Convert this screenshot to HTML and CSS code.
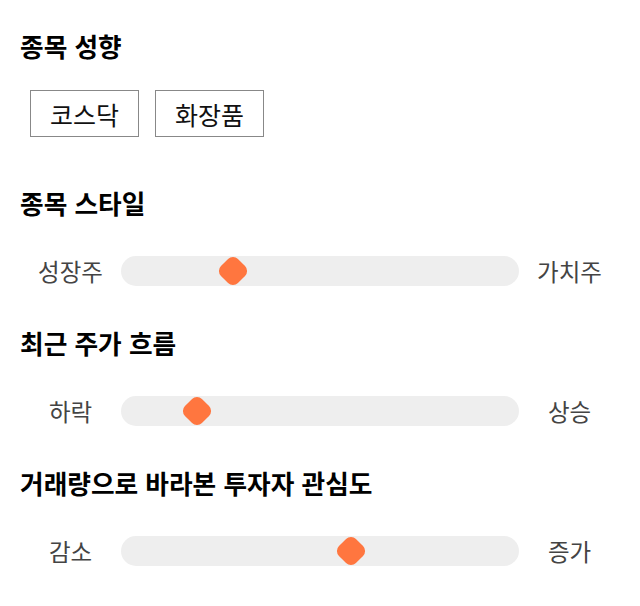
FILE: index.html
```html
<!DOCTYPE html>
<html lang="ko">
<head>
<meta charset="utf-8">
<link rel="stylesheet" href="styles.css">
</head>
<body>
<section class="section first">
  <h2 class="title">종목 성향</h2>
  <div class="chips">
    <span class="chip">코스닥</span>
    <span class="chip">화장품</span>
  </div>
</section>
<section class="section second">
  <h2 class="title">종목 스타일</h2>
  <div class="slider">
    <span class="label">성장주</span>
    <div class="track"><span class="thumb" style="left:28.1%"></span></div>
    <span class="label">가치주</span>
  </div>
</section>
<section class="section">
  <h2 class="title">최근 주가 흐름</h2>
  <div class="slider">
    <span class="label">하락</span>
    <div class="track"><span class="thumb" style="left:19.1%"></span></div>
    <span class="label">상승</span>
  </div>
</section>
<section class="section">
  <h2 class="title">거래량으로 바라본 투자자 관심도</h2>
  <div class="slider">
    <span class="label">감소</span>
    <div class="track"><span class="thumb" style="left:57.8%"></span></div>
    <span class="label">증가</span>
  </div>
</section>
</body>
</html>
```
FILE: styles.css
```css
html, body {
  margin: 0;
  padding: 0;
  background: #fff;
}
body {
  font-family: "Noto Sans CJK KR", "Noto Sans", sans-serif;
  color: #000;
  padding: 32px 20px 0;
}
.section {
  margin-top: 43px;
}
.section.first {
  margin-top: 0;
}
.section.second {
  margin-top: 52px;
}
.title {
  margin: 0 0 39px;
  font-size: 25.7px;
  font-weight: 700;
  line-height: 28px;
}
.first .title {
  margin-bottom: 30px;
}
.chips {
  display: flex;
  gap: 16px;
  padding-left: 10px;
}
.chip {
  box-sizing: border-box;
  height: 47px;
  width: 109px;
  border: 1px solid #888;
  display: flex;
  align-items: center;
  justify-content: center;
  font-size: 25px;
  color: #111;
}
.slider {
  display: flex;
  align-items: center;
  height: 30px;
}
.label {
  width: 101px;
  text-align: center;
  font-size: 23.5px;
  color: #444;
  flex: none;
}
.track {
  position: relative;
  flex: 1;
  height: 30px;
  background: #eee;
  border-radius: 15px;
}
.thumb {
  position: absolute;
  top: 50%;
  width: 24px;
  height: 24px;
  background: #ff763f;
  border-radius: 7px;
  transform: translate(-50%, -50%) rotate(45deg);
}
```
